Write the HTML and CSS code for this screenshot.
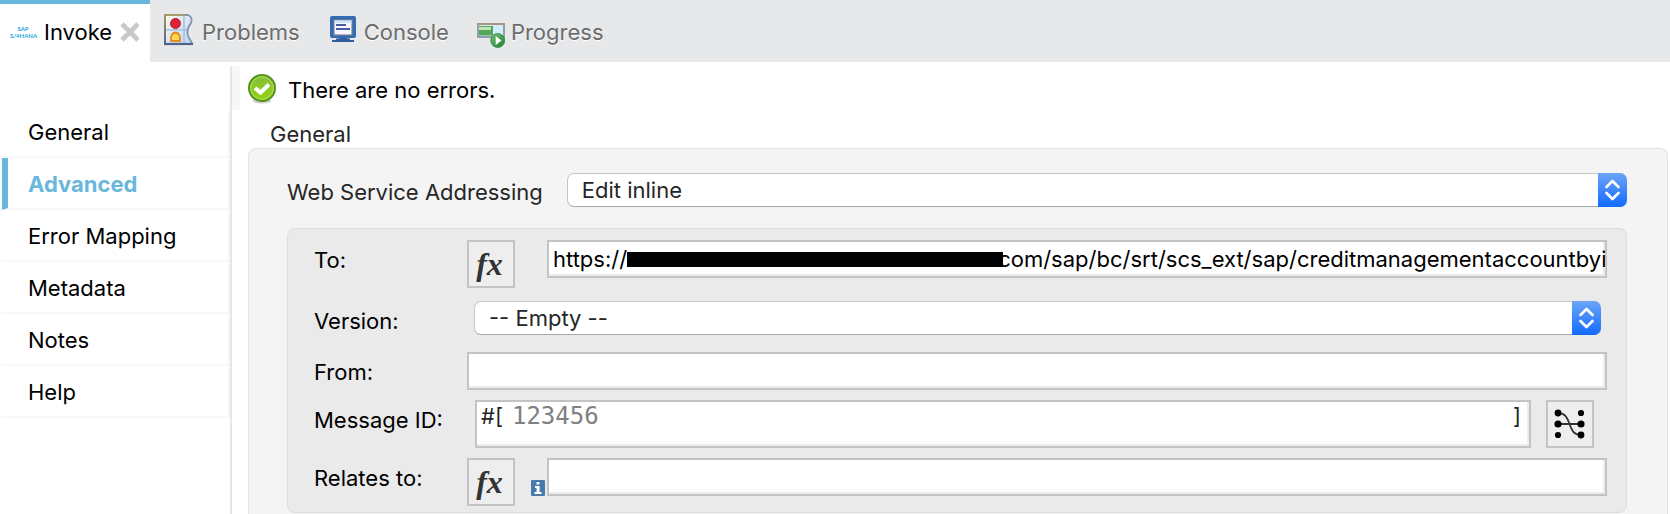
FILE: index.html
```html
<!DOCTYPE html>
<html lang="en">
<head>
<meta charset="utf-8">
<title>Invoke</title>
<link rel="stylesheet" href="styles.css">
</head>
<body>
<header class="tabs">
  <div class="tab tab-active">
    <span class="sap-logo">SAP<br>S/4HANA</span>
    <a class="tab-link" href="#invoke">Invoke</a>
    <button class="close" type="button" aria-label="Close Invoke">
      <svg width="20" height="20" viewBox="0 0 20 20"><path d="M2 2 18 18M18 2 2 18" stroke="#c9c9c9" stroke-width="4.6"/></svg>
    </button>
  </div>
  <a class="tab tab-problems" href="#problems">
    <svg width="30" height="32" viewBox="0 0 30 32">
      <defs><linearGradient id="pb" x1="0" y1="0" x2="1" y2="1"><stop offset="0" stop-color="#fbf7ea"/><stop offset="1" stop-color="#bcd8f4"/></linearGradient>
      <linearGradient id="ps" x1="0" y1="0" x2="0" y2="1"><stop offset="0" stop-color="#a99a5c"/><stop offset="1" stop-color="#50618f"/></linearGradient></defs>
      <path d="M1 1H25Q29 4 27 9Q21 17 25 24L28 30H1Z" fill="url(#pb)"/>
      <path d="M20 2V29M2 16H23" stroke="#a9bfe8" stroke-width="1.6"/>
      <rect x="0" y="0" width="2" height="31" fill="url(#ps)"/>
      <path d="M0 1H20" stroke="#a99a6a" stroke-width="2"/>
      <path d="M20 1H24Q29 3 27 9Q21 17 25 24L28 29" fill="none" stroke="#8296b4" stroke-width="1.8"/>
      <path d="M0 30H29" stroke="#50618c" stroke-width="2.2"/>
      <circle cx="11.500" cy="9.500" r="5" fill="#dc2238" stroke="#b81d35" stroke-width="1"/>
      <path d="M7 27V23Q8 19 11.500 18.500Q15 19 16 23V27Z" fill="#ffd557" stroke="#e58a20" stroke-width="1.800"/>
    </svg>
    <span>Problems</span>
  </a>
  <a class="tab tab-console" href="#console">
    <svg width="26" height="26" viewBox="0 0 26 26">
      <path d="M9 21H17V24H9Z" fill="#315d9c"/><path d="M2 25H24M6 23.500H20" stroke="#315d9c" stroke-width="2"/>
      <rect width="26" height="22" rx="2" fill="#326cb6"/><rect x="3" y="3" width="20" height="17" fill="#63748f"/>
      <rect x="4.500" y="4.500" width="17" height="14" fill="#f5f8ff"/><path d="M4.500 4.500H21.500V7H4.500Z" fill="#cfe6fa"/>
      <path d="M6 9H14M11 9H16M6 13H20" stroke="#4b5c9a" stroke-width="1.800"/>
    </svg>
    <span>Console</span>
  </a>
  <a class="tab tab-progress" href="#progress">
    <svg width="28" height="25" viewBox="0 0 28 25">
      <defs><linearGradient id="go" x1="0" y1="0" x2="1" y2="1"><stop offset="0" stop-color="#74c172"/><stop offset="1" stop-color="#1d8030"/></linearGradient></defs>
      <rect x="1" y="1" width="26" height="13" fill="#d4ecfb" stroke="#7d8e97" stroke-width="1.600"/>
      <path d="M0 1H28" stroke="#a99682" stroke-width="2"/>
      <rect x="2" y="3" width="14" height="9.500" fill="#54a75a"/><path d="M2 4H14V7H2Z" fill="#c3e3b8"/>
      <circle cx="20.700" cy="17.500" r="7" fill="url(#go)" stroke="#2d8544" stroke-width=".8"/>
      <path d="M18.700 13 24.500 17.500 18.700 22Z" fill="#fff"/>
    </svg>
    <span>Progress</span>
  </a>
</header>

<div class="body">
  <nav class="sidebar">
    <a class="nav-item" href="#general">General</a>
    <a class="nav-item nav-active" href="#advanced">Advanced</a>
    <a class="nav-item" href="#mapping">Error Mapping</a>
    <a class="nav-item" href="#metadata">Metadata</a>
    <a class="nav-item" href="#notes">Notes</a>
    <a class="nav-item" href="#help">Help</a>
  </nav>

  <main class="main">
    <div class="status">
      <svg width="28" height="30" viewBox="0 0 28 30">
        <defs><linearGradient id="ok" x1="0" y1="0" x2="0" y2="1"><stop offset="0" stop-color="#84bf3a"/><stop offset="1" stop-color="#95d10d"/></linearGradient></defs>
        <ellipse cx="14" cy="27" rx="9" ry="2.500" fill="#ccc"/>
        <circle cx="14" cy="14" r="13" fill="url(#ok)" stroke="#529719" stroke-width="2"/>
        <circle cx="14" cy="14" r="11.300" fill="none" stroke="#b3dc6c" stroke-width="1"/>
        <path d="M7 14 12.500 18.500 21 10.500" fill="none" stroke="#fff" stroke-width="4"/>
      </svg>
      <span>There are no errors.</span>
    </div>
    <h2 class="group-title">General</h2>
    <section class="group">
      <div class="addressing">
        <label for="wsa">Web Service Addressing</label>
        <div class="select">
          <select id="wsa"><option>Edit inline</option></select>
          <span class="stepper"><svg width="15" height="22" viewBox="0 0 15 22"><path d="M1.500 8 7.500 2 13.500 8M1.500 14 7.500 20 13.500 14"/></svg></span>
        </div>
      </div>

      <div class="panel">
        <div class="row">
          <label for="to">To:</label>
          <button class="icon-button fx" type="button" aria-label="To expression">fx</button>
          <div class="text-box after-fx">
            <span>https://</span><span class="redacted"></span>
            <input id="to" value="com/sap/bc/srt/scs_ext/sap/creditmanagementaccountbyi">
          </div>
        </div>
        <div class="row version-row">
          <label for="version">Version:</label>
          <div class="select">
            <select id="version"><option>-- Empty --</option></select>
            <span class="stepper"><svg width="15" height="22" viewBox="0 0 15 22"><path d="M1.500 8 7.500 2 13.500 8M1.500 14 7.500 20 13.500 14"/></svg></span>
          </div>
        </div>
        <div class="row">
          <label for="from">From:</label>
          <div class="text-box"><input id="from"></div>
        </div>
        <div class="row message-row">
          <label for="message">Message ID:</label>
          <div class="text-box expression">
            <span>#[</span><input id="message" placeholder="123456"><span>]</span>
          </div>
          <button class="icon-button" type="button" aria-label="Map message ID">
            <svg width="34" height="34" viewBox="0 0 34 34">
              <path d="M5 6C20 6 13 28 28 28M5 17H28" fill="none" stroke="#333" stroke-width="1.800"/>
              <g fill="#000"><circle cx="5" cy="6" r="3.400"/><circle cx="5" cy="17" r="3.600"/><circle cx="5" cy="28" r="3.100"/><circle cx="28" cy="6" r="3.100"/><circle cx="28" cy="17" r="3.600"/><circle cx="28" cy="28" r="3.400"/></g>
            </svg>
          </button>
        </div>
        <div class="row">
          <label for="relates">Relates to:</label>
          <button class="icon-button fx" type="button" aria-label="Relates to expression">fx</button>
          <svg class="info" width="14" height="16" viewBox="0 0 14 16"><rect width="14" height="16" rx="1" fill="#487bad"/><path d="M5.500 2H8.500V4.600H5.500ZM4 6H8.600V12H10.500V14H3.500V12H5.600V8H4Z" fill="#fff"/></svg>
          <div class="text-box"><input id="relates"></div>
        </div>
      </div>
    </section>
  </main>
</div>
</body>
</html>
```
FILE: styles.css
```css
* { box-sizing: border-box; }
body {
  margin: 0;
  height: 100vh;
  display: flex;
  flex-direction: column;
  overflow: hidden;
  background: #fff;
  color: #000;
  font: 22px/28px Inter, "Liberation Sans", sans-serif;
}
a { color: inherit; text-decoration: none; }
button, input, select { font: inherit; color: inherit; margin: 0; padding: 0; }
svg { display: block; flex: none; }

.tabs { display: flex; height: 62px; flex: none; background: #e6e8ea; }
.tab { display: flex; align-items: center; gap: 8px; padding-left: 14px; padding-top: 2px; color: #6c6c6c; text-shadow: 0 1px 0 #fff; }
.tab-active { width: 150px; padding: 0 10px 2px 10px; border-top: 4px solid #69b7dc; background: #fff; color: #000; }
.sap-logo { width: 26px; color: #1ba5dc; font: 700 6px/7px Lato, sans-serif; text-align: center; }
.close { border: 0; background: none; }
.tab-problems svg { margin-bottom: 4px; }
.tab-console, .tab-progress { padding-left: 30px; }
.tab-console svg { margin-bottom: 6px; }
.tab-progress { gap: 6px; padding-left: 28px; }
.tab-progress svg { margin-top: 6px; }

.body { display: flex; flex: 1; min-height: 0; padding-top: 4px; }
.sidebar { flex: none; width: 232px; padding: 40px 0 0 2px; border-right: 2px solid #e6e6e6; }
.nav-item { display: block; padding: 12px 0 10px 26px; height: 52px; border-right: 2px solid #f8f8f8; border-bottom: 2px solid #f8f8f8; }
.nav-active { padding-left: 20px; border-left: 6px solid #69b7dc; color: #69b7dc; font-weight: 700; }

.main { flex: 1; min-width: 0; padding-right: 2px; display: flex; flex-direction: column; }
.status { display: flex; align-items: center; gap: 12px; height: 44px; flex: none; padding: 2px 0 0 8px; border-left: 8px solid #f7f7f7; }
.status span { padding-top: 2px; }
.group-title { margin: 10px 0 0 38px; font-size: 22px; line-height: 28px; font-weight: 400; color: #262626; }
.group { flex: 1 0 auto; margin-left: 16px; padding: 24px 40px 0 38px; background: #f4f4f4; border: 1px solid #e1e1e1; border-bottom: 0; border-radius: 8px 8px 0 0; }
.addressing { display: flex; gap: 24px; height: 34px; color: #262626; }
.addressing label { line-height: 38px; white-space: nowrap; }

.select { position: relative; flex: 1; height: 34px; color: #262626; }
.select select { width: 100%; height: 34px; padding: 0 40px 0 14px; appearance: none; border: 1px solid #c6c6c6; border-bottom-color: #a9a9a9; border-radius: 7px; background: #fff; }
.stepper { position: absolute; right: 0; top: 0; display: grid; place-items: center; width: 29px; height: 34px; border-radius: 0 7px 7px 0; background: linear-gradient(#6ba5f8, #126aff); pointer-events: none; }
.stepper path { fill: none; stroke: #fff; stroke-width: 2.6; stroke-linecap: round; stroke-linejoin: round; }

.panel { display: flex; flex-direction: column; gap: 10px; margin-top: 21px; padding: 11px 19px 6px 26px; background: #eaeaea; border: 1px solid #dcdcdc; border-radius: 8px; }
.row { display: flex; align-items: flex-start; }
.row label { flex: none; width: 153px; height: 38px; line-height: 40px; }
.version-row { height: 44px; padding: 3px 6px 7px 0; }
.version-row .select { margin-left: 7px; }

.text-box { flex: 1; min-width: 0; display: flex; align-items: center; height: 38px; padding: 0 2px 0 4px; border: 2px solid #c3c3c3; background: #fff; box-shadow: inset -2px -2px 0 #ececec; }
.text-box input { flex: 1; min-width: 0; width: 0; height: 30px; border: 0; outline: 0; background: none; }
.after-fx { margin-left: 32px; padding-right: 0; }
.redacted { flex: none; width: 376px; height: 15px; margin-right: -5px; background: #000; }
.icon-button { flex: none; display: grid; place-items: center; width: 48px; height: 48px; border: 2px solid #c3c3c3; background: #eee; }
.fx { padding-right: 3px; color: #333; font: italic 700 32px/36px "Liberation Serif", serif; }

.message-row { padding-right: 13px; }
.expression { height: 48px; margin: 0 15px 0 8px; padding: 0 8px 0 4px; align-items: flex-start; color: #262626; }
.expression input { margin-left: 9px; font: 24px/28px "DejaVu Sans Mono", monospace; height: 28px; }
.expression input::placeholder { color: #808080; opacity: 1; }
.info { margin: 22px 2px 0 16px; }
```
